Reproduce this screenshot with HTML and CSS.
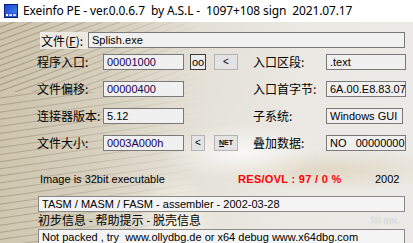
FILE: index.html
```html
<!DOCTYPE html>
<html>
<head>
<meta charset="utf-8">
<link rel="stylesheet" href="styles.css">
</head>
<body>
<div class="window">
  <div class="titlebar">
    <svg class="appicon" width="14" height="14" viewBox="0 0 14 14">
      <defs>
        <linearGradient id="ig" x1="0" y1="0" x2="1" y2="1">
          <stop offset="0" stop-color="#1a3fd0"/>
          <stop offset="1" stop-color="#4a8cf0"/>
        </linearGradient>
      </defs>
      <rect x="0.5" y="0.5" width="13" height="13" fill="url(#ig)" stroke="#0a1e80"/>
      <rect x="1" y="9" width="12" height="4" fill="#2a55c8"/>
      <rect x="2" y="10" width="2" height="2" fill="#ffffff"/>
      <rect x="5" y="10" width="3" height="2" fill="#c8d8ff"/>
      <rect x="9" y="10" width="3" height="2" fill="#c8d8ff"/>
    </svg>
    <span class="title">Exeinfo PE - ver.0.0.6.7&nbsp; by A.S.L -&nbsp; 1097+108 sign&nbsp; 2021.07.17</span>
  </div>
  <div class="main">
    <div class="filerow">
      <span class="filelabel">文件(<u>F</u>):</span>
      <span class="field wide">Splish.exe</span>
    </div>
    <div class="grid">
      <span class="lbl">程序入口:</span>
      <span class="field purple">00001000</span>
      <span class="btn dark">oo</span>
      <span class="btn wbtn">&lt;</span>
      <span class="lbl2">入口区段:</span>
      <span class="field">.text</span>

      <span class="lbl">文件偏移:</span>
      <span class="field purple">00000400</span>
      <span></span>
      <span></span>
      <span class="lbl2">入口首字节:</span>
      <span class="field clip">6A.00.E8.83.07</span>

      <span class="lbl">连接器版本:</span>
      <span class="field">5.12</span>
      <span></span>
      <span></span>
      <span class="lbl2">子系统:</span>
      <span class="field narrow">Windows GUI</span>

      <span class="lbl">文件大小:</span>
      <span class="field purple">0003A000h</span>
      <span class="btn sm">&lt;</span>
      <span class="btn wbtn net"><u>N</u>ET</span>
      <span class="lbl2">叠加数据:</span>
      <span class="field">NO&nbsp;&nbsp; 00000000</span>
    </div>
    <div class="infoline">
      <span class="img">Image is 32bit executable</span>
      <span class="res">RES/OVL : 97 / 0 %</span>
      <span class="year">2002</span>
    </div>
    <div class="box">TASM / MASM / FASM - assembler - 2002-03-28</div>
    <div class="help">初步信息 - 帮助提示 - 脱壳信息<span class="ms">16 ms.</span></div>
    <div class="box">Not packed , try&nbsp; www.ollydbg.de or x64 debug www.x64dbg.com</div>
  </div>
</div>
</body>
</html>
```
FILE: styles.css
```css
html, body {
  margin: 0;
  padding: 0;
  width: 413px;
  height: 243px;
  overflow: hidden;
}
.window {
  width: 413px;
  height: 243px;
  display: flex;
  flex-direction: column;
  font-family: "Liberation Sans", Arial, sans-serif;
  font-size: 11px;
  color: #000;
}
.titlebar {
  height: 22px;
  flex: none;
  background: #ffffff;
  display: flex;
  align-items: center;
  padding-left: 4px;
  gap: 5px;
}
.appicon { display: block; margin-top: -1px; }
.title {
  font-family: "Noto Sans", "Open Sans", sans-serif;
  font-size: 12px;
  letter-spacing: -0.12px;
  color: #000;
  white-space: pre;
  margin-top: -1px;
}
.main {
  flex: 1;
  position: relative;
  padding-top: 10px;
  background:
    radial-gradient(ellipse 110px 40px at 240px 130px, rgba(255,255,255,0.75), rgba(255,255,255,0) 70%),
    radial-gradient(ellipse 60px 90px at 175px 215px, rgba(255,250,235,0.9), rgba(255,255,255,0) 70%),
    radial-gradient(ellipse 180px 30px at 330px 148px, rgba(215,200,165,0.5), rgba(255,255,255,0) 70%),
    linear-gradient(100deg, #cdc3ab 0%, #d6cfbd 25%, #e4e0d6 45%, #ebe9e4 70%, #eceae6 100%);
  box-sizing: border-box;
  z-index: 0;
}
.main::before {
  content: "";
  position: absolute;
  left: 0;
  top: 0;
  width: 240px;
  height: 221px;
  z-index: -1;
  background:
    repeating-linear-gradient(160deg, rgba(80,65,40,0) 0px, rgba(80,65,40,0) 4px, rgba(80,65,40,0.35) 5px, rgba(80,65,40,0) 6px) 0 0 / 240px 70px no-repeat,
    repeating-linear-gradient(172deg, rgba(80,65,40,0) 0px, rgba(80,65,40,0) 5px, rgba(80,65,40,0.28) 6px, rgba(80,65,40,0) 7px) 0 70px / 240px 151px no-repeat;
  -webkit-mask-image: linear-gradient(90deg, #000 0%, rgba(0,0,0,0.6) 40%, rgba(0,0,0,0) 85%);
  mask-image: linear-gradient(90deg, #000 0%, rgba(0,0,0,0.6) 40%, rgba(0,0,0,0) 85%);
}
.filerow {
  display: flex;
  margin-left: 40px;
  height: 17px;
}
.filelabel {
  width: 48px;
  background: #ece9e3;
  font-family: "Noto Sans CJK SC", sans-serif;
  font-size: 12px;
  line-height: 17px;
  padding-left: 1px;
  box-sizing: border-box;
}
.filelabel u { text-decoration: underline; }
.field {
  height: 16px;
  box-sizing: border-box;
  background: #f0f0f0;
  border: 1px solid #7a7a7a;
  line-height: 14px;
  padding-left: 3px;
  white-space: nowrap;
  overflow: hidden;
  color: #000;
}
.field.wide { width: 317px; }
.field.purple { color: #200050; }
.field.narrow { width: 77px; }
.grid {
  margin-left: 37px;
  margin-top: 5px;
  display: grid;
  grid-template-columns: 66px 81px 22px 32px 88px 80px;
  row-gap: 11px;
  grid-auto-rows: 16px;
  align-items: center;
}
.lbl, .lbl2 {
  font-family: "Noto Sans CJK SC", sans-serif;
  font-size: 12px;
  line-height: 16px;
  white-space: nowrap;
}
.lbl2 { margin-left: 15px; }
.btn {
  height: 16px;
  box-sizing: border-box;
  background: #e3e3e3;
  border: 1px solid #b4b4b4;
  font-size: 10px;
  line-height: 14px;
  text-align: center;
  color: #000;
}
.btn.dark { border-color: #3c3c3c; width: 16px; font-size: 11px; background: #ececec; margin-left: 6px; }
.btn.sm { width: 14px; margin-left: 7px; }
.btn.wbtn { width: 24px; margin-left: 8px; }
.btn.net { font-size: 7px; font-weight: bold; }
.infoline {
  margin-top: 21px;
  height: 14px;
  line-height: 14px;
  display: flex;
  padding-left: 40px;
}
.img { width: 198px; }
.res {
  color: #ff0000;
  font-weight: bold;
  width: 137px;
  letter-spacing: 0.3px;
}
.box {
  margin-left: 38px;
  width: 367px;
  height: 16px;
  box-sizing: border-box;
  background: #f4f4f4;
  border: 1px solid #8a8a8a;
  line-height: 14px;
  padding-left: 3px;
  white-space: nowrap;
  overflow: hidden;
}
.infoline + .box { margin-top: 10px; }
.help {
  margin-left: 38px;
  height: 17px;
  font-family: "Noto Sans CJK SC", sans-serif;
  font-size: 12px;
  line-height: 16px;
  position: relative;
}
.ms {
  position: absolute;
  left: 332px;
  top: 1px;
  font-family: "Liberation Sans", sans-serif;
  font-size: 10px;
  color: #f4f4f4;
  text-shadow: 0 0 1px #9a9a9a;
}
```
